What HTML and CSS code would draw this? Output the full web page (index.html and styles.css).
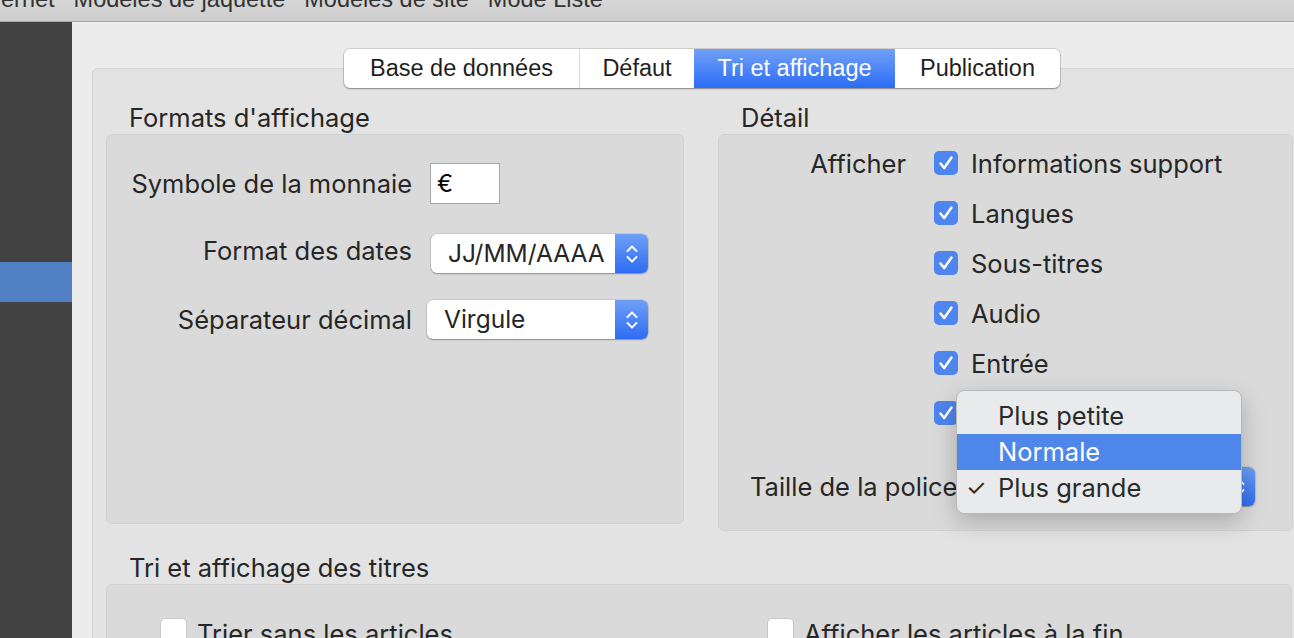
FILE: index.html
```html
<!DOCTYPE html>
<html lang="fr">
<head>
  <meta charset="UTF-8">
  <title>Préférences</title>
  <link rel="stylesheet" href="styles.css">
</head>
<body>
  <!-- Toolbar (cut off at the top) -->
  <div class="toolbar">
    <span>ernet</span>
    <span>Modèles de jaquette</span>
    <span>Modèles de site</span>
    <span>Mode Liste</span>
  </div>

  <div class="window">
    <div class="sidebar">
      <div class="sidebar-selected"></div>
    </div>

    <div class="main">
      <div class="tab-view">
        <div class="segmented">
          <div class="segment seg-base">Base de données</div>
          <div class="segment seg-defaut">Défaut</div>
          <div class="segment seg-tri active">Tri et affichage</div>
          <div class="segment seg-pub">Publication</div>
        </div>

        <div class="columns">
          <!-- Formats d'affichage -->
          <section class="group">
            <h2 class="group-title">Formats d'affichage</h2>
            <div class="group-box formats">
              <label class="row-label">Symbole de la monnaie</label>
              <div class="text-field">€</div>

              <label class="row-label">Format des dates</label>
              <div class="popup popup-dates">
                <span class="popup-value">JJ/MM/AAAA</span>
                <span class="stepper">
                  <svg width="14" height="24" viewBox="0 0 14 24"><path d="M2.5 9 L7 4.5 L11.5 9 M2.5 15 L7 19.5 L11.5 15" fill="none" stroke="#fff" stroke-width="1.8" stroke-linecap="round" stroke-linejoin="round"/></svg>
                </span>
              </div>

              <label class="row-label">Séparateur décimal</label>
              <div class="popup popup-sep">
                <span class="popup-value">Virgule</span>
                <span class="stepper">
                  <svg width="14" height="24" viewBox="0 0 14 24"><path d="M2.5 9 L7 4.5 L11.5 9 M2.5 15 L7 19.5 L11.5 15" fill="none" stroke="#fff" stroke-width="1.8" stroke-linecap="round" stroke-linejoin="round"/></svg>
                </span>
              </div>
            </div>
          </section>

          <!-- Détail -->
          <section class="group">
            <h2 class="group-title">Détail</h2>
            <div class="group-box detail">
              <div class="check-list">
                <div class="check-row">
                  <span class="row-label afficher">Afficher</span>
                  <span class="checkbox checked"><svg width="24" height="24" viewBox="0 0 24 24"><path d="M6.5 12.5 L10.2 17 L17.5 6.5" fill="none" stroke="#fff" stroke-width="2.5" stroke-linecap="round" stroke-linejoin="round"/></svg></span>
                  <span class="check-label">Informations support</span>
                </div>
                <div class="check-row">
                  <span class="checkbox checked"><svg width="24" height="24" viewBox="0 0 24 24"><path d="M6.5 12.5 L10.2 17 L17.5 6.5" fill="none" stroke="#fff" stroke-width="2.5" stroke-linecap="round" stroke-linejoin="round"/></svg></span>
                  <span class="check-label">Langues</span>
                </div>
                <div class="check-row">
                  <span class="checkbox checked"><svg width="24" height="24" viewBox="0 0 24 24"><path d="M6.5 12.5 L10.2 17 L17.5 6.5" fill="none" stroke="#fff" stroke-width="2.5" stroke-linecap="round" stroke-linejoin="round"/></svg></span>
                  <span class="check-label">Sous-titres</span>
                </div>
                <div class="check-row">
                  <span class="checkbox checked"><svg width="24" height="24" viewBox="0 0 24 24"><path d="M6.5 12.5 L10.2 17 L17.5 6.5" fill="none" stroke="#fff" stroke-width="2.5" stroke-linecap="round" stroke-linejoin="round"/></svg></span>
                  <span class="check-label">Audio</span>
                </div>
                <div class="check-row">
                  <span class="checkbox checked"><svg width="24" height="24" viewBox="0 0 24 24"><path d="M6.5 12.5 L10.2 17 L17.5 6.5" fill="none" stroke="#fff" stroke-width="2.5" stroke-linecap="round" stroke-linejoin="round"/></svg></span>
                  <span class="check-label">Entrée</span>
                </div>
                <div class="check-row">
                  <span class="checkbox checked"><svg width="24" height="24" viewBox="0 0 24 24"><path d="M6.5 12.5 L10.2 17 L17.5 6.5" fill="none" stroke="#fff" stroke-width="2.5" stroke-linecap="round" stroke-linejoin="round"/></svg></span>
                </div>
              </div>

              <div class="font-row">
                <span class="row-label">Taille de la police</span>
                <div class="popup popup-font">
                  <span class="popup-value"></span>
                  <span class="stepper">
                    <svg width="14" height="24" viewBox="0 0 14 24"><path d="M2.5 9 L7 4.5 L11.5 9 M2.5 15 L7 19.5 L11.5 15" fill="none" stroke="#fff" stroke-width="1.8" stroke-linecap="round" stroke-linejoin="round"/></svg>
                  </span>
                </div>
              </div>

              <!-- open popup menu -->
              <ul class="menu">
                <li class="menu-item">Plus petite</li>
                <li class="menu-item highlighted">Normale</li>
                <li class="menu-item"><span class="menu-check">✓</span>Plus grande</li>
              </ul>
            </div>
          </section>
        </div>

        <!-- Tri et affichage des titres -->
        <section class="group wide">
          <h2 class="group-title titles-title">Tri et affichage des titres</h2>
          <div class="group-box titles">
            <div class="plain-check">
              <span class="checkbox"></span>
              <span class="check-label">Trier sans les articles</span>
            </div>
            <div class="plain-check">
              <span class="checkbox"></span>
              <span class="check-label">Afficher les articles à la fin</span>
            </div>
          </div>
        </section>
      </div>
    </div>
  </div>
</body>
</html>
```

FILE: styles.css
```css
html, body {
  margin: 0;
  padding: 0;
  height: 100%;
  overflow: hidden;
}

body {
  font-family: Inter, "Noto Sans", sans-serif;
  color: #262626;
  background-color: #ececec;
}

/* Toolbar */
.toolbar {
  height: 21px;
  background: linear-gradient(#d6d6d6, #cdcdcd);
  border-bottom: 1px solid #a9a9a9;
  display: flex;
  gap: 19px;
  padding-left: 1px;
  overflow: hidden;
  font-family: "Liberation Sans", Arial, sans-serif;
  font-size: 23.5px;
  line-height: 1;
  color: #333;
}

.toolbar span {
  margin-top: -12px;
}

.window {
  display: flex;
  height: calc(100% - 22px);
}

/* Sidebar */
.sidebar {
  width: 72px;
  flex-shrink: 0;
  background-color: #424242;
  padding-top: 240px;
}

.sidebar-selected {
  height: 40px;
  background-color: #5181c4;
}

/* Main */
.main {
  flex: 1;
  padding-left: 20px;
  padding-top: 46px;
}

.tab-view {
  width: 1220px;
  background-color: #e3e3e3;
  border: 1px solid #d3d3d3;
  border-radius: 6px;
  padding: 0 19px 0 13px;
  box-sizing: border-box;
  height: 700px;
}

/* Segmented control */
.segmented {
  display: flex;
  width: max-content;
  margin: -20px 0 0 238px;
  background-color: #fff;
  border-radius: 6px;
  box-shadow: 0 0 0 1px rgba(0, 0, 0, 0.12), 0 1px 1.5px rgba(0, 0, 0, 0.3);
  font-family: "Liberation Sans", Arial, sans-serif;
  font-size: 23.5px;
  color: #1f1f1f;
  overflow: hidden;
}

.segment {
  height: 39px;
  line-height: 39px;
  text-align: center;
  box-sizing: border-box;
  border-left: 1px solid #dcdcdc;
}

.seg-base {
  width: 235px;
  border-left: none;
}

.seg-defaut {
  width: 115px;
}

.seg-tri {
  width: 201px;
}

.seg-pub {
  width: 165px;
}

.segment.active {
  background: linear-gradient(#71a1f6, #2b6cf6);
  color: #fff;
  border-left: none;
}

.segment.active + .segment {
  border-left: none;
}

/* Groups */
.columns {
  display: grid;
  grid-template-columns: 578px 575px;
  column-gap: 34px;
  align-items: start;
}

.group-title {
  margin: 0;
  padding: 16px 0 0 23px;
  height: 30px;
  font-size: 25.5px;
  font-weight: 400;
  line-height: 28px;
  white-space: nowrap;
}

.group-box {
  background-color: #dadada;
  border: 1px solid #d1d1d1;
  border-radius: 6px;
  box-sizing: border-box;
}

.row-label {
  font-size: 25.5px;
  text-align: right;
  white-space: nowrap;
}

/* Formats d'affichage */
.formats {
  height: 390px;
  display: grid;
  grid-template-columns: 305px auto;
  grid-auto-rows: max-content;
  column-gap: 18px;
  align-items: center;
  justify-items: start;
  padding-top: 28px;
}

.formats .row-label {
  justify-self: end;
}

.text-field {
  width: 70px;
  height: 41px;
  box-sizing: border-box;
  background-color: #fff;
  border: 1px solid #a7a7a7;
  font-size: 24px;
  line-height: 39px;
  padding-left: 6px;
  color: #000;
}

.popup {
  display: flex;
  align-items: stretch;
  height: 39px;
  background-color: #fff;
  border-radius: 6px;
  box-shadow: 0 0 0 0.5px rgba(0, 0, 0, 0.15), 0 1px 1.5px rgba(0, 0, 0, 0.3);
  box-sizing: border-box;
}

.popup-value {
  flex: 1;
  font-size: 24.5px;
  line-height: 39px;
  padding-left: 17px;
  white-space: nowrap;
}

.stepper {
  width: 33px;
  display: flex;
  align-items: center;
  justify-content: center;
  background: linear-gradient(#6f9ff6, #2e6df4);
  border-radius: 0 6px 6px 0;
}

.popup-dates {
  width: 217px;
  margin: 30px 0 0 1px;
}

.popup-sep {
  width: 221px;
  margin: 27px 0 0 -3px;
}

.formats .row-label:nth-of-type(2) {
  margin-top: 24px;
}

.formats .row-label:nth-of-type(3) {
  margin-top: 27px;
}

/* Détail */
.detail {
  position: relative;
  height: 397px;
  padding-top: 3px;
}

.check-row {
  display: flex;
  align-items: center;
  height: 50px;
  padding-left: 215px;
  position: relative;
}

.afficher {
  position: absolute;
  right: 386px;
}

.checkbox {
  width: 24px;
  height: 24px;
  border-radius: 5px;
  flex-shrink: 0;
  margin-right: 13px;
  box-sizing: border-box;
}

.checkbox svg {
  display: block;
}

.checkbox.checked {
  background-color: #4f85ef;
}

.check-label {
  font-size: 25.5px;
  white-space: nowrap;
}

.font-row {
  display: flex;
  align-items: center;
  justify-content: space-between;
  margin-top: 29px;
  padding: 0 37px 0 31px;
}

.popup-font {
  width: 296px;
}

/* Open popup menu */
.menu {
  position: absolute;
  left: 237px;
  top: 255px;
  width: 286px;
  margin: 0;
  padding: 7px 0;
  list-style: none;
  background-color: #e9eaec;
  border: 1px solid #b8b8b8;
  border-radius: 8px;
  box-shadow: 0 8px 24px rgba(0, 0, 0, 0.22);
  box-sizing: border-box;
}

.menu-item {
  position: relative;
  height: 36px;
  line-height: 36px;
  padding-left: 41px;
  font-size: 25.5px;
  color: #2a2a2a;
}

.menu-item.highlighted {
  background-color: #4f86ea;
  color: #fff;
}

.menu-check {
  position: absolute;
  left: 9px;
  font-size: 23px;
}

/* Tri et affichage des titres */
.titles-title {
  padding-top: 23px;
}

.titles {
  height: 200px;
  display: grid;
  grid-template-columns: 607px auto;
  align-content: start;
  padding: 33px 0 0 53px;
}

.plain-check {
  display: flex;
  align-items: flex-start;
}

.plain-check .checkbox {
  width: 27px;
  height: 27px;
  background-color: #fff;
  border: 1px solid #c8c8c8;
  border-radius: 5px;
  margin-right: 10px;
}

.plain-check .check-label {
  line-height: 27px;
  margin-top: 2px;
}
```
